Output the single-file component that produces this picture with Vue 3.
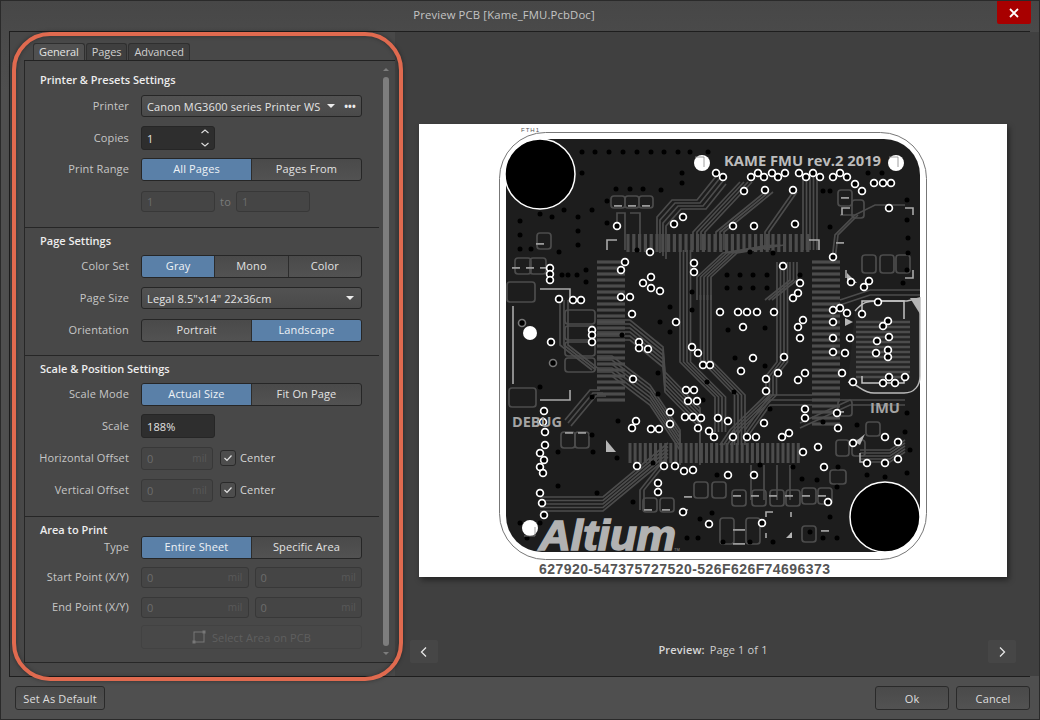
<script setup>
// pcb preview data, all coords are page pixels (viewBox matches the paper position)
const vias = [[716,173],[723,177],[751,177],[758,173],[764,177],[772,173],[778,177],[785,173],[799,173],[806,177],[813,173],[820,177],[833,177],[840,173],[847,177],[855,184],[862,191],[874,183],[883,183],[891,183],[744,191],[765,190],[793,190],[889,208],[683,217],[674,224],[733,226],[754,226],[795,224],[617,226],[650,252],[625,262],[621,270],[694,263],[694,272],[783,266],[550,268],[550,274],[550,280],[800,283],[798,293],[793,298],[833,257],[851,282],[864,287],[869,281],[651,277],[643,283],[651,288],[660,291],[621,297],[630,297],[559,299],[573,300],[581,300],[632,314],[676,322],[720,312],[738,312],[747,312],[757,312],[774,312],[743,327],[803,320],[798,327],[800,338],[833,310],[840,308],[847,313],[833,322],[862,314],[878,302],[888,321],[883,326],[833,338],[850,338],[877,341],[889,337],[833,352],[845,353],[876,353],[888,350],[888,357],[551,342],[592,330],[592,335],[592,342],[639,342],[639,348],[648,349],[692,347],[698,353],[753,358],[784,357],[633,379],[703,365],[710,365],[741,371],[766,379],[766,391],[778,373],[798,380],[805,373],[842,373],[853,382],[883,383],[889,377],[895,383],[905,377],[686,390],[694,390],[688,401],[697,401],[670,412],[670,424],[685,417],[693,417],[701,418],[718,418],[728,421],[764,423],[805,409],[805,418],[837,413],[838,428],[544,411],[543,422],[545,432],[636,421],[632,428],[651,429],[659,429],[698,428],[709,431],[714,437],[733,437],[747,437],[756,437],[782,437],[789,433],[803,452],[818,447],[824,467],[853,443],[885,437],[898,442],[898,459],[885,463],[867,463],[545,445],[540,453],[544,460],[540,467],[543,473],[540,493],[542,503],[544,515],[637,466],[664,466],[675,466],[684,471],[693,470],[728,475],[754,475],[658,483],[658,492],[828,502],[683,512],[709,524],[762,523]]
const dimVias = [[522,323],[553,363]]
const discs = [[702,163,8],[896,163,8],[530,528,8],[530,333,7]]
const drills = [[582,152],[595,152],[609,152],[623,152],[637,152],[651,152],[664,152],[678,152],[690,152],[708,152],[582,173],[682,173],[682,183],[823,191],[830,191],[868,173],[882,173],[616,189],[630,189],[643,189],[661,190],[607,201],[564,210],[592,210],[540,214],[552,217],[578,217],[520,221],[607,223],[578,231],[520,235],[578,245],[520,249],[531,249],[559,252],[637,250],[907,200],[907,220],[908,238],[908,253],[907,270],[903,283],[727,275],[740,275],[753,275],[767,275],[727,288],[740,288],[753,288],[767,288],[562,275],[568,275],[577,275],[586,270],[586,282],[692,292],[692,310],[670,307],[660,322],[728,330],[765,328],[750,252],[773,253],[670,332],[622,335],[830,227],[800,275],[540,387],[658,373],[735,358],[765,366],[734,392],[707,382],[658,394],[592,397],[703,400],[770,409],[618,421],[592,435],[558,452],[593,452],[617,458],[558,486],[597,493],[633,502],[653,463],[717,475],[760,465],[793,467],[823,422],[857,425],[867,475],[885,477],[907,413],[905,432],[910,450],[907,473],[802,479],[817,480],[837,487],[863,492],[830,517],[823,538],[837,538],[810,532],[773,542],[750,542],[723,542],[698,538],[687,538],[700,519],[712,513],[527,538],[520,523],[540,523],[838,467]]

// routed tracks: polyline, copies, x and y step between copies
const bundles = [
  [[[657,250],[657,217],[672,200],[697,200],[717,175]], 4, 3, 3],
  [[[693,250],[693,232],[740,182]], 4, 4, 0],
  [[[716,250],[716,232],[765,192]], 3, 4, 0],
  [[[765,250],[765,232],[793,192]], 2, 4, 0],
  [[[803,250],[803,177]], 5, 3.5, 0],
  [[[680,250],[680,362],[715,397],[715,432]], 4, 3.5, 0],
  [[[697,300],[697,277],[723,253],[770,245]], 5, 3.5, 0],
  [[[711,295],[711,360],[745,395],[745,445]], 4, -3.5, 0],
  [[[777,262],[777,362],[766,376],[766,395],[730,430],[720,445]], 4, 3.5, 0],
  [[[765,300],[790,280],[790,262]], 3, 3.5, 0],
  [[[597,320],[630,320],[663,347],[665,372],[700,408],[700,445]], 6, 0, 4],
  [[[597,356],[612,356],[650,385],[680,430],[680,445]], 6, 0, 4],
  [[[540,497],[603,497],[668,443]], 5, 0, 3.5],
  [[[565,420],[590,390],[600,390]], 3, 3, 3],
  [[[560,300],[560,345],[592,370]], 3, 4, 0],
  [[[800,423],[850,400],[905,400]], 2, 0, 5],
  [[[840,300],[870,290],[920,290]], 2, 0, 5],
  [[[812,395],[770,395],[745,430]], 3, 0, 5],
  [[[860,450],[890,450],[905,440]], 5, 0, 3],
  [[[617,226],[617,213],[625,213],[625,250]], 1, 0, 0],
  [[[630,213],[640,213],[640,250]], 1, 0, 0],
  [[[660,465],[640,490],[640,510]], 2, 4, 0],
  [[[790,465],[790,500]], 4, -13, 0],
  [[[840,215],[855,215],[875,205],[905,205]], 1, 0, 0],
  [[[832,260],[835,235],[855,215]], 2, 3, 0]
]

const range = (n, from, step) => Array.from({ length: n }, (_, i) => from + i * step)
const combTop = range(32, 628, 5.8)
const combBottom = range(34, 630, 5.1)
const combLeft = range(24, 262, 6)
const combRight = range(28, 262, 6)

const pads = [[611,196,14,12],[625,196,14,12],[639,196,14,12],[515,258,16,16],[530,258,16,16],[537,233,14,16],[507,282,28,20],[565,310,30,14],[565,326,30,14],[565,342,30,14],[565,358,30,14],[509,388,27,19],[561,432,14,16],[575,432,14,16],[643,498,14,14],[660,498,14,14],[694,482,14,16],[712,482,14,16],[732,490,14,16],[752,490,14,16],[770,490,14,16],[786,490,14,16],[802,488,14,16],[818,488,14,16],[720,518,14,26],[746,518,14,26],[802,526,14,16],[836,440,13,16],[852,440,13,16],[830,470,16,14],[838,400,14,16],[866,422,14,14],[838,190,14,16],[862,255,14,18],[880,255,14,18],[896,255,14,18],[852,200,12,18]]
const ticks = [[614,205,8],[628,205,8],[642,205,8],[536,243,8],[512,267,8],[526,267,8],[540,267,8],[733,529,12],[733,543,12],[821,530,8],[841,197,8],[836,242,8],[644,509,8],[662,509,8],[680,509,8],[733,495,8],[751,495,8],[769,495,8],[785,495,8],[802,495,8],[818,495,8],[684,496,8],[836,411,8],[565,432,8],[578,432,8]]
// corner marks, drawn as open polylines
const marks = ['607,250 607,240 617,240','809,240 819,240 819,250','842,215 842,208 850,208','905,208 913,208 913,215','846,270 846,278','905,278 913,278 913,270','540,289 570,289 570,300','513,306 513,384','540,400 570,400 570,390','766,517 766,512 773,512','791,512 791,517','766,533 766,538','791,538 791,533','863,462 860,462 860,453']
const wedges = ['847,273 857,283 847,283','606,440 616,452 606,452','910,298 920,298 920,314','845,318 853,322 845,326','855,442 865,434 860,445','792,532 792,538 786,538']

const tracePath = (pts, dx, dy) => pts.map(p => `${p[0] + dx},${p[1] + dy}`).join(' ')
const traces = bundles.flatMap(([pts, n, ox, oy]) =>
  Array.from({ length: n }, (_, i) => tracePath(pts, i * ox, i * oy))
)

const tabs = ['General', 'Pages', 'Advanced']
const printRange = [{ label: 'All Pages', on: true }, { label: 'Pages From' }]
const colorSet = [{ label: 'Gray', on: true }, { label: 'Mono' }, { label: 'Color' }]
const orientation = [{ label: 'Portrait' }, { label: 'Landscape', on: true }]
const scaleMode = [{ label: 'Actual Size', on: true }, { label: 'Fit On Page' }]
const areaType = [{ label: 'Entire Sheet', on: true }, { label: 'Specific Area' }]
const offsets = ['Horizontal Offset', 'Vertical Offset']
const points = ['Start Point (X/Y)', 'End Point (X/Y)']
</script>

<template>
  <div class="window">
    <header class="titlebar">
      <span class="title">Preview PCB [Kame_FMU.PcbDoc]</span>
      <button class="close">
        <svg width="12" height="12" viewBox="0 0 12 12"><path d="M2 2l8 8M10 2l-8 8" stroke="#fff" stroke-width="1.8" /></svg>
      </button>
    </header>

    <div class="frame">
      <aside class="side">
        <div class="tabs">
          <span v-for="(t, i) in tabs" :key="t" class="tab" :class="{ current: i === 0 }">{{ t }}</span>
        </div>
        <div class="panel">
          <div class="form">
            <section class="group">
              <h3>Printer &amp; Presets Settings</h3>
              <div class="row">
                <label>Printer</label>
                <div class="select">
                  <span>Canon MG3600 series Printer WS</span>
                  <i class="caret"></i>
                  <b class="dots">•••</b>
                </div>
              </div>
              <div class="row">
                <label>Copies</label>
                <div class="input dark short">
                  <span>1</span>
                  <svg class="spin" width="10" height="22" viewBox="0 0 10 22"><path d="M1.5 6L5 3l3.5 3M1.5 16L5 19l3.5-3" fill="none" stroke="#ddd" stroke-width="1.1" /></svg>
                </div>
              </div>
              <div class="row narrow">
                <label>Print Range</label>
                <div class="seg">
                  <span v-for="o in printRange" :key="o.label" :class="{ on: o.on }">{{ o.label }}</span>
                </div>
              </div>
              <div class="row">
                <label></label>
                <div class="pair">
                  <div class="input off short"><span>1</span></div>
                  <em>to</em>
                  <div class="input off short"><span>1</span></div>
                </div>
              </div>
            </section>

            <section class="group">
              <h3>Page Settings</h3>
              <div class="row">
                <label>Color Set</label>
                <div class="seg">
                  <span v-for="o in colorSet" :key="o.label" :class="{ on: o.on }">{{ o.label }}</span>
                </div>
              </div>
              <div class="row">
                <label>Page Size</label>
                <div class="select">
                  <span>Legal 8.5"x14" 22x36cm</span>
                  <i class="caret end"></i>
                </div>
              </div>
              <div class="row">
                <label>Orientation</label>
                <div class="seg">
                  <span v-for="o in orientation" :key="o.label" :class="{ on: o.on }">{{ o.label }}</span>
                </div>
              </div>
            </section>

            <section class="group scale">
              <h3>Scale &amp; Position Settings</h3>
              <div class="row">
                <label>Scale Mode</label>
                <div class="seg">
                  <span v-for="o in scaleMode" :key="o.label" :class="{ on: o.on }">{{ o.label }}</span>
                </div>
              </div>
              <div class="row">
                <label>Scale</label>
                <div class="input dark short"><span>188%</span></div>
              </div>
              <div v-for="o in offsets" :key="o" class="row">
                <label>{{ o }}</label>
                <div class="pair">
                  <div class="input off short tall"><span>0</span><small>mil</small></div>
                  <span class="check">
                    <svg width="14" height="14" viewBox="0 0 14 14"><path d="M3.5 7l2.5 2.5 4.5-5" fill="none" stroke="#e4e4e4" stroke-width="1.2" /></svg>
                  </span>
                  <span class="check-label">Center</span>
                </div>
              </div>
            </section>

            <section class="group area">
              <h3>Area to Print</h3>
              <div class="row">
                <label>Type</label>
                <div class="seg">
                  <span v-for="o in areaType" :key="o.label" :class="{ on: o.on }">{{ o.label }}</span>
                </div>
              </div>
              <div v-for="p in points" :key="p" class="row">
                <label>{{ p }}</label>
                <div class="pair split">
                  <div class="input off"><span>0</span><small>mil</small></div>
                  <div class="input off"><span>0</span><small>mil</small></div>
                </div>
              </div>
              <div class="row">
                <label></label>
                <div class="select-area">
                  <svg width="14" height="14" viewBox="0 0 14 14"><rect x="2" y="2" width="10" height="10" fill="none" stroke="#777" /><rect x="0.5" y="10.5" width="3" height="3" fill="#777" /><rect x="10.5" y="0.5" width="3" height="3" fill="#777" /></svg>
                  <span>Select Area on PCB</span>
                </div>
              </div>
            </section>
          </div>

          <div class="scroll">
            <i class="arrow up"></i>
            <div class="thumb"></div>
            <i class="arrow down"></i>
          </div>
        </div>
      </aside>

      <main class="preview">
        <div class="paper">
          <svg class="pcb" width="588" height="453" viewBox="419 124 588 453">
            <rect x="499.5" y="132.5" width="427" height="427" rx="46" fill="none" stroke="#777" />
            <rect x="506" y="139" width="414" height="413" rx="36" fill="#1d1d1d" />
            <g stroke="#4c4c4c" stroke-width="1.7" fill="none">
              <polyline v-for="(t, i) in traces" :key="i" :points="t" />
              <line v-for="x in combTop" :key="'t' + x" :x1="x" y1="234" :x2="x" y2="252" stroke-width="3.2" />
              <line v-for="x in combBottom" :key="'b' + x" :x1="x" y1="443" :x2="x" y2="463" stroke-width="3" />
              <line v-for="y in combLeft" :key="'l' + y" x1="597" :y1="y" x2="625" :y2="y" stroke-width="3.2" />
              <line v-for="y in combRight" :key="'r' + y" x1="812" :y1="y" x2="840" :y2="y" stroke-width="3.2" />
              <rect v-for="(p, i) in pads" :key="'p' + i" :x="p[0]" :y="p[1]" :width="p[2]" :height="p[3]" rx="3" />
            </g>
            <path d="M855 311c8-9 12-10 22-10h30l13-3v78c0 9-5 17-16 17h-30c-12 0-14-8-26-11" fill="#232323" stroke="#bbb" stroke-width="1.4" />
            <g stroke="#4c4c4c" stroke-width="2.6">
              <line v-for="y in range(12, 322, 5)" :key="'ic' + y" x1="856" :y1="y" x2="910" :y2="y" />
            </g>
            <path d="M862 317v-16h42v18M862 376v7h42v-7" fill="none" stroke="#c4c4c4" stroke-width="1.5" />
            <g fill="#999">
              <rect v-for="(t, i) in ticks" :key="'k' + i" :x="t[0]" :y="t[1]" :width="t[2]" height="1.8" />
            </g>
            <g fill="none" stroke="#a9a9a9" stroke-width="1.6">
              <polyline v-for="m in marks" :key="m" :points="m" />
            </g>
            <polygon v-for="w in wedges" :key="w" :points="w" fill="#b5b5b5" />
            <circle v-for="(d, i) in drills" :key="'d' + i" :cx="d[0]" :cy="d[1]" r="2.5" fill="#000" />
            <circle v-for="(v, i) in dimVias" :key="'g' + i" :cx="v[0]" :cy="v[1]" r="3.5" fill="#000" stroke="#777" stroke-width="1.6" />
            <circle v-for="(v, i) in vias" :key="'v' + i" :cx="v[0]" :cy="v[1]" r="3.4" fill="#000" stroke="#fff" stroke-width="1.7" />
            <circle v-for="(c, i) in discs" :key="'w' + i" :cx="c[0]" :cy="c[1]" :r="c[2]" fill="#fff" />
            <path d="M695 157h9v10M889 157h9v10M524 536h11v-9" fill="none" stroke="#888" stroke-width="0.8" />
            <circle cx="540" cy="174" r="35" fill="#000" stroke="#fff" stroke-width="1.5" />
            <circle cx="885" cy="517" r="35" fill="#000" stroke="#fff" stroke-width="1.5" />
            <text x="521" y="132" class="t-ref" textLength="18">FTH1</text>
            <text x="724" y="166" class="t-kame" textLength="157" lengthAdjust="spacingAndGlyphs">KAME FMU rev.2 2019</text>
            <text x="870" y="413" class="t-label" textLength="30" lengthAdjust="spacingAndGlyphs">IMU</text>
            <text x="512" y="427" class="t-label" textLength="50" lengthAdjust="spacingAndGlyphs">DEBUG</text>
            <text x="539" y="550" class="t-logo" textLength="137" lengthAdjust="spacingAndGlyphs">Altium</text>
            <text x="674" y="551" class="t-ref dim">TM</text>
            <text x="539" y="574" class="t-code" textLength="291">627920-547375727520-526F626F74696373</text>
          </svg>
        </div>
        <footer class="pager">
          <button class="page-btn">
            <svg width="10" height="12" viewBox="0 0 10 12"><path d="M7 1.5L2.5 6 7 10.5" fill="none" stroke="#e6e6e6" stroke-width="1.3" /></svg>
          </button>
          <div class="page-text"><b>Preview:</b><span>Page 1 of 1</span></div>
          <button class="page-btn">
            <svg width="10" height="12" viewBox="0 0 10 12"><path d="M3 1.5L7.5 6 3 10.5" fill="none" stroke="#e6e6e6" stroke-width="1.3" /></svg>
          </button>
        </footer>
      </main>
    </div>

    <footer class="actions">
      <button class="btn wide">Set As Default</button>
      <div class="right">
        <button class="btn">Ok</button>
        <button class="btn">Cancel</button>
      </div>
    </footer>

    <!-- callout drawn on top of the screenshot -->
    <div class="callout"></div>
  </div>
</template>

<style>
html, body { margin: 0; background: #4c4c4c; }
</style>

<style scoped>
.window {
  position: relative;
  width: 1040px;
  height: 720px;
  box-sizing: border-box;
  background: linear-gradient(#474747, #4f4f4f 90px, #4f4f4f);
  font-family: "Open Sans", "Noto Sans", sans-serif;
  font-size: 11px;
  letter-spacing: 0.14px;
  color: #d6d6d6;
  overflow: hidden;
  border: 1px solid #2a2a2a;
  display: flex;
  flex-direction: column;
  white-space: nowrap;
}
.titlebar {
  height: 30px;
  display: flex;
  justify-content: center;
  position: relative;
  flex: none;
}
.title { font-size: 11.3px; line-height: 28px; color: #c4c4c4; margin-right: 32px; }
.close {
  position: absolute;
  right: 8px;
  top: 0;
  width: 34px;
  height: 23px;
  background: #a80000;
  border: 0;
  border-radius: 0 0 2px 2px;
  display: flex;
  align-items: center;
  justify-content: center;
  padding: 0;
}

.frame {
  margin: 0 9px 0 8px;
  height: 646px;
  flex: none;
  border: 1px solid #1e1e1e;
  display: flex;
  box-sizing: border-box;
}
.side {
  width: 385px;
  flex: none;
  background: #484848;
  padding: 11px 0 13px 14px;
  box-sizing: border-box;
  display: flex;
  flex-direction: column;
}
.tabs { display: flex; padding-left: 9px; gap: 1px; height: 17px; flex: none; border-bottom: 1px solid #222; }
.tab {
  height: 17px;
  box-sizing: border-box;
  padding: 0 5px;
  line-height: 16px;
  letter-spacing: -0.1px;
  background: #3f3f3f;
  border: 1px solid #2f2f2f;
  border-bottom: 0;
  border-radius: 3px 3px 0 0;
  color: #cfcfcf;
}
.tab.current { background: #505050; color: #e4e4e4; }
.panel {
  flex: 1;
  display: flex;
  border-left: 1px solid #272727;
  border-bottom: 1px solid #272727;
  min-height: 0;
}
.form { width: 354px; flex: none; padding-top: 8px; box-sizing: border-box; }
.group { border-bottom: 1px solid #262626; padding-bottom: 9px; }
.group:first-child { padding-bottom: 10px; }
.group + .group { padding-top: 3px; }
.group:last-child { border-bottom: 0; }
.group.scale { padding-bottom: 10px; }
.group h3 {
  margin: 0 0 0 15px;
  height: 19px;
  line-height: 19px;
  font-size: 11px;
  font-weight: 600;
  letter-spacing: 0;
  color: #ededed;
}
.group:first-child h3 { height: 21px; line-height: 21px; }
.row {
  height: 32px;
  display: flex;
  align-items: center;
  gap: 12px;
}
.row.narrow { height: 31px; }
.row label {
  width: 104px;
  flex: none;
  text-align: right;
  color: #c6c6c6;
  margin-bottom: 2px;
}
.area { padding-bottom: 0; }
.group.area h3 { height: 12px; line-height: 19px; }
.area .row { height: 30px; }
.select {
  width: 221px;
  height: 22px;
  box-sizing: border-box;
  border: 1px solid #262626;
  border-radius: 3px;
  background: linear-gradient(#525252, #4a4a4a);
  display: flex;
  align-items: center;
  padding: 0 5px;
  color: #e4e4e4;
}
.caret {
  margin-left: 7px;
  border: 4px solid transparent;
  border-top: 4px solid #ececec;
  border-bottom: 0;
}
.caret.end { margin-left: auto; margin-right: 2px; }
.dots { margin-left: 9px; font-size: 10px; letter-spacing: 0; color: #ececec; }
.input {
  height: 23px;
  box-sizing: border-box;
  border: 1px solid #383838;
  border-radius: 3px;
  display: flex;
  align-items: center;
  padding: 0 5px;
  position: relative;
}
.input.short { width: 74px; }
.input.dark { background: #2e2e2e; border-color: #262626; color: #e2e2e2; height: 24px; }
.input.off { background: #454545; color: #6c6c6c; height: 21px; }
.input.off.tall { height: 23px; width: 72px; }
.input small { margin-left: auto; font-size: 10px; color: #595959; }
.spin { position: absolute; right: 4px; top: 0; }
.seg {
  width: 221px;
  height: 23px;
  box-sizing: border-box;
  display: flex;
  border: 1px solid #262626;
  border-radius: 3px;
  overflow: hidden;
  background: linear-gradient(#4a4a4a, #525252);
}
.seg span {
  flex: 1;
  text-align: center;
  line-height: 20px;
  color: #e2e2e2;
  border-left: 1px solid #2c2c2c;
}
.seg span:first-child { border-left: 0; }
.seg span.on { background: #5a80a8; color: #eef2f6; }
.pair { display: flex; align-items: center; width: 221px; }
.pair em { font-style: normal; width: 21px; text-align: center; color: #7b7b7b; }
.check {
  width: 16px;
  height: 16px;
  box-sizing: border-box;
  margin-left: 7px;
  border: 1px solid #2a2a2a;
  border-radius: 3px;
  background: #4d4d4d;
  display: block;
}
.check svg { display: block; }
.check-label { margin-left: 4px; color: #d6d6d6; margin-bottom: 2px; }
.pair.split { gap: 6px; }
.pair.split .input { flex: 1; }
.select-area {
  width: 221px;
  height: 24px;
  box-sizing: border-box;
  border: 1px solid #424242;
  border-radius: 3px;
  display: flex;
  align-items: center;
  justify-content: center;
  gap: 6px;
  color: #5f5f5f;
}
.scroll {
  width: 7px;
  margin-left: 3px;
  padding-top: 7px;
  display: flex;
  flex-direction: column;
  align-items: center;
  gap: 6px;
}
.thumb { width: 6px; flex: 1; border-radius: 3px; background: #7d7d7d; }
.arrow { border: 3.5px solid transparent; }
.arrow.up { border-top: 0; border-bottom: 3.5px solid #7d7d7d; }
.arrow.down { border-bottom: 0; border-top: 3.5px solid #7d7d7d; margin-bottom: 7px; }

.preview {
  flex: 1;
  background: #404040;
  padding: 92px 23px 0 24px;
  box-sizing: border-box;
}
.paper { width: 588px; height: 453px; background: #fff; box-shadow: 2px 3px 6px rgba(0, 0, 0, 0.45); }
.pcb { display: block; }
.t-ref { font: 6px "Liberation Sans", sans-serif; fill: #555; letter-spacing: 0; }
.t-ref.dim { fill: #999; font-size: 4px; }
.t-kame { font: 700 15px "Open Sans", sans-serif; fill: #bcbcbc; letter-spacing: 0; }
.t-label { font: 700 14px "Open Sans", sans-serif; fill: #a4a4a4; letter-spacing: 0; }
.t-logo { font: italic 700 43px "Liberation Sans", sans-serif; fill: #b2b2b2; stroke: #b2b2b2; stroke-width: 1.6; letter-spacing: 0; }
.t-code { font: 700 14px "Liberation Sans", sans-serif; fill: #555; letter-spacing: 0; }
.pager {
  margin: 63px 0 0 -9px;
  width: 606px;
  height: 23px;
  display: flex;
  align-items: center;
  justify-content: space-between;
}
.page-btn {
  width: 28px;
  height: 23px;
  padding: 0;
  background: #464646;
  border: 0;
  border-radius: 2px;
  display: flex;
  align-items: center;
  justify-content: center;
}
.page-text { display: flex; gap: 5px; margin: 0 0 4px 0; color: #cfcfcf; }
.page-text b { color: #d8d8d8; font-weight: 600; }

.actions {
  flex: 1;
  display: flex;
  justify-content: space-between;
  padding: 9px 9px 0 14px;
}
.right { display: flex; gap: 7px; }
.btn {
  width: 74px;
  height: 24px;
  padding: 0;
  background: linear-gradient(#4a4a4a, #525252);
  border: 1px solid #2a2a2a;
  border-radius: 3px;
  color: #dedede;
  font: inherit;
  letter-spacing: inherit;
}
.btn.wide { width: 90px; }

.callout {
  position: absolute;
  left: 11px;
  top: 31px;
  width: 391px;
  height: 649px;
  box-sizing: border-box;
  border: 4px solid #e06a4f;
  border-radius: 38px;
  box-shadow: 0 0 4px rgba(0, 0, 0, 0.4), inset 0 0 4px rgba(0, 0, 0, 0.35);
}
</style>
